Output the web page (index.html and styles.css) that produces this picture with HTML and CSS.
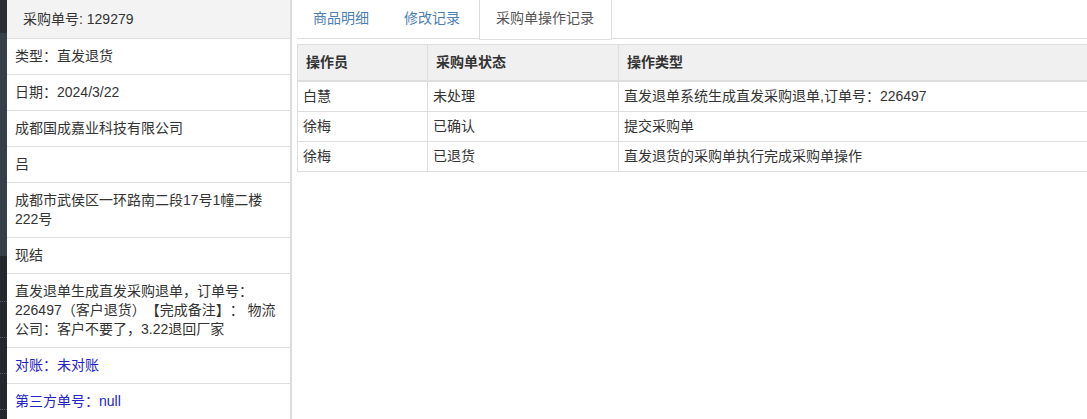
FILE: index.html
```html
<!DOCTYPE html>
<html lang="zh-CN">
<head>
<meta charset="utf-8">
<title>采购单</title>
<link rel="stylesheet" href="styles.css">
</head>
<body>
<div class="page">
  <div class="strip">
    <div class="strip-top"></div>
    <div class="strip-mid"></div>
    <div class="strip-bottom">
      <div class="dots"></div>
      <div class="dots"></div>
      <div class="dots"></div>
      <div class="dots"></div>
    </div>
  </div>
  <aside class="info">
    <div class="info-head">采购单号: 129279</div>
    <div class="info-row">类型：直发退货</div>
    <div class="info-row">日期：2024/3/22</div>
    <div class="info-row">成都国成嘉业科技有限公司</div>
    <div class="info-row">吕</div>
    <div class="info-row">成都市武侯区一环路南二段17号1幢二楼222号</div>
    <div class="info-row">现结</div>
    <div class="info-row">直发退单生成直发采购退单，订单号：226497（客户退货）【完成备注】： 物流公司：客户不要了，3.22退回厂家</div>
    <div class="info-row blue">对账：未对账</div>
    <div class="info-row blue">第三方单号：null</div>
  </aside>
  <main class="main">
    <ul class="tabs">
      <li class="tab">商品明细</li>
      <li class="tab">修改记录</li>
      <li class="tab active">采购单操作记录</li>
    </ul>
    <table class="log">
      <colgroup>
        <col class="c1"><col class="c2"><col>
      </colgroup>
      <thead>
        <tr><th>操作员</th><th>采购单状态</th><th>操作类型</th></tr>
      </thead>
      <tbody>
        <tr><td>白慧</td><td>未处理</td><td>直发退单系统生成直发采购退单,订单号：226497</td></tr>
        <tr><td>徐梅</td><td>已确认</td><td>提交采购单</td></tr>
        <tr><td>徐梅</td><td>已退货</td><td>直发退货的采购单执行完成采购单操作</td></tr>
      </tbody>
    </table>
  </main>
</div>
</body>
</html>
```

FILE: styles.css
```css
html, body {
  margin: 0;
  padding: 0;
  height: 100%;
  overflow: hidden;
  background: #ffffff;
}

body {
  font-family: "Liberation Sans", "Noto Sans CJK SC", sans-serif;
  font-size: 14px;
  color: #333333;
  text-spacing-trim: space-all;
}

.page {
  display: flex;
  height: 419px;
}

.strip {
  width: 7px;
  flex: none;
  display: flex;
  flex-direction: column;
}

.strip-top {
  height: 33px;
  background: #2b2f35;
}

.strip-mid {
  height: 223px;
  background: #36404b;
}

.strip-bottom {
  flex: 1;
  background: #24272c;
  padding-top: 45px;
  display: flex;
  flex-direction: column;
  gap: 34px;
}

.dots {
  height: 1px;
  border-top: 1px dotted #5a5e64;
}

.info {
  width: 283px;
  flex: none;
  border-right: 2px solid #dcdcdc;
  display: flex;
  flex-direction: column;
}

.info-head {
  height: 20px;
  line-height: 20px;
  padding: 9px 8px 9px 16px;
  background: #f3f3f3;
  border-bottom: 1px solid #dddddd;
}

.info-row {
  padding: 8px 8px;
  line-height: 19px;
  border-bottom: 1px solid #dddddd;
}

.info-row.blue {
  color: #2424cc;
}

.main {
  flex: 1;
  padding-left: 5px;
  min-width: 0;
}

.tabs {
  list-style: none;
  margin: 0;
  padding: 0;
  height: 38px;
  display: flex;
  gap: 2px;
  border-bottom: 1px solid #dddddd;
}

.tab {
  padding: 0 16px 0 15px;
  height: 38px;
  line-height: 37px;
  color: #4b80b5;
  border: 1px solid transparent;
  border-top: none;
}

.tab.active {
  padding: 0 17px 0 16px;
  color: #555555;
  background: #ffffff;
  border-color: #dddddd;
  border-top: none;
  height: 39px;
}

.log {
  margin-top: 5px;
  width: calc(100% + 2px);
  border-collapse: collapse;
  border: 1px solid #dddddd;
  table-layout: fixed;
}

.log .c1 { width: 130px; }
.log .c2 { width: 191px; }

.log th {
  text-align: left;
  font-weight: bold;
  background: #f0f0f0;
  padding: 8px 8px;
  line-height: 19px;
  border: 1px solid #dddddd;
  border-bottom: 2px solid #dddddd;
}

.log td {
  padding: 5px 5px;
  line-height: 19px;
  border: 1px solid #dddddd;
  white-space: nowrap;
}
```
